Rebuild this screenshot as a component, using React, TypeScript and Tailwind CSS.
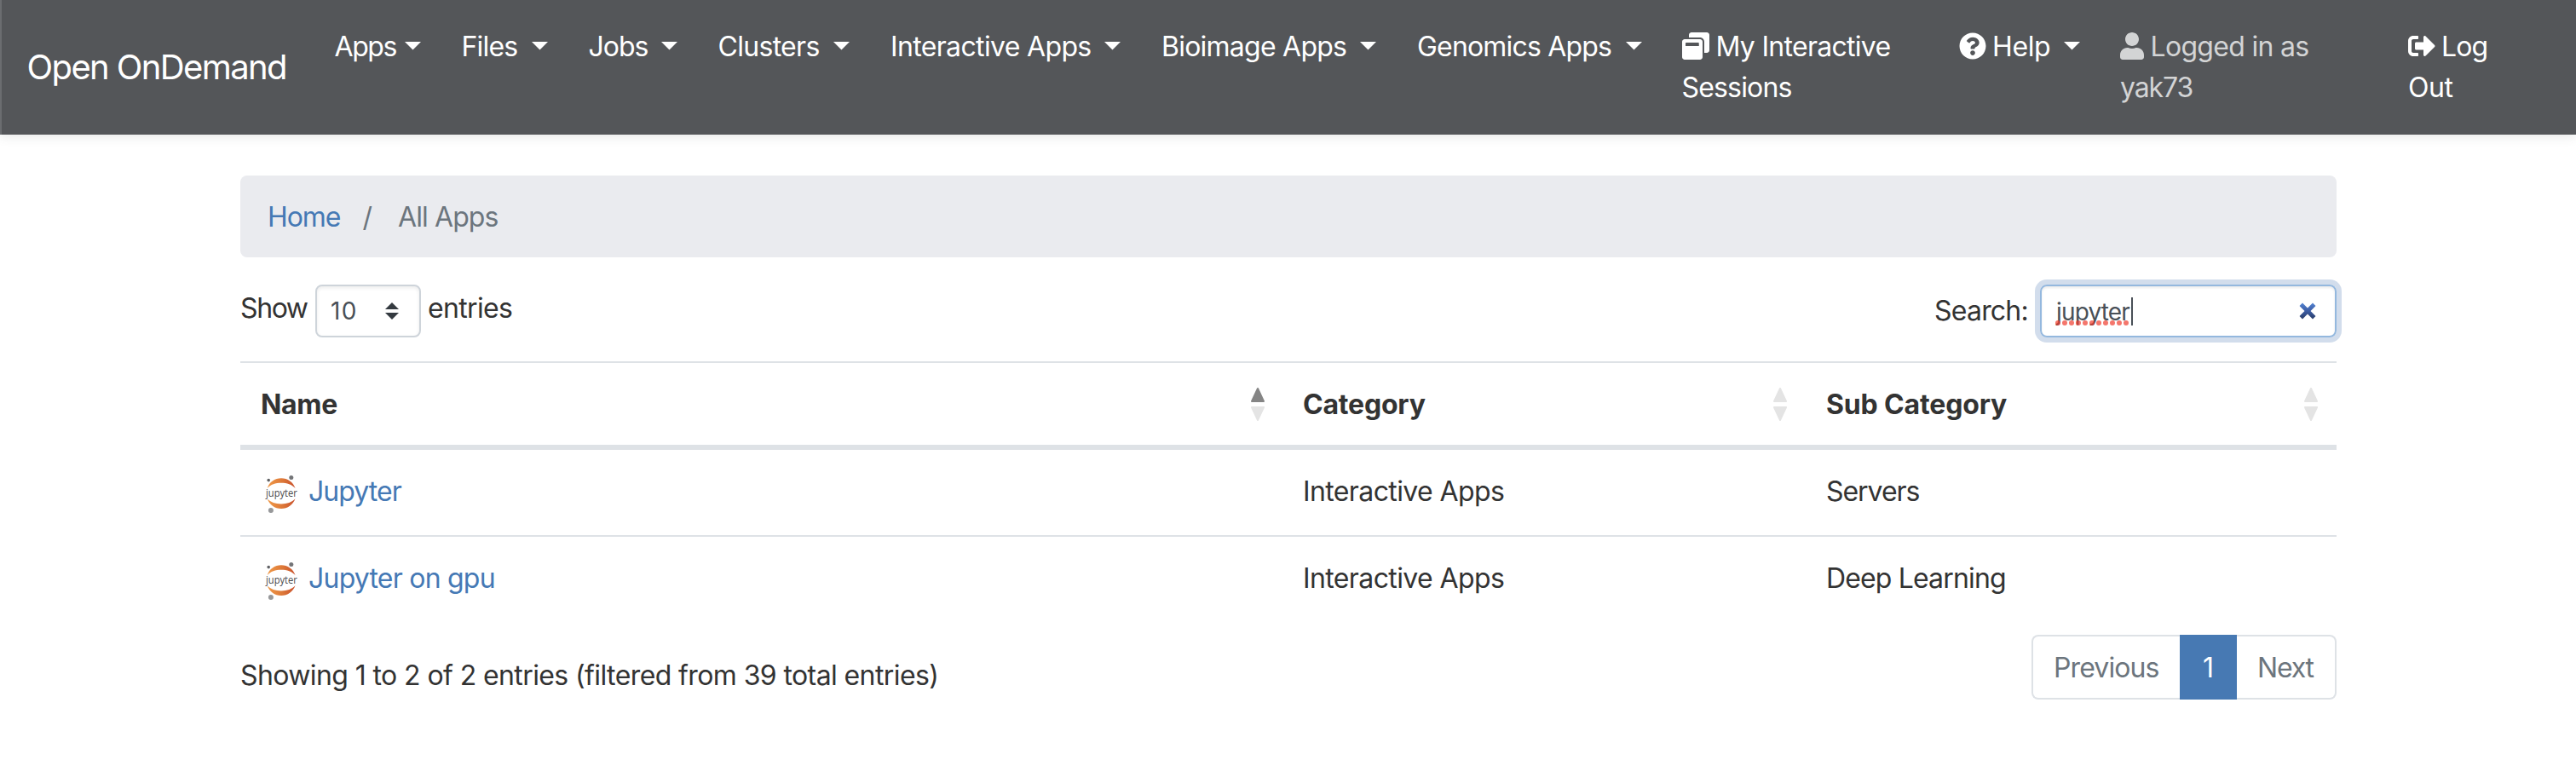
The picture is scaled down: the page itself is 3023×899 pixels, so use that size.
import { FaQuestionCircle, FaSignOutAlt, FaUser, FaWindowRestore } from "react-icons/fa";

const menus = [
  { label: "Apps", box: "w-[101px]", text: "tracking-[-1.4px]" },
  { label: "Files", box: "w-[102px]", text: "pl-px tracking-[-0.8px]" },
  { label: "Jobs", box: "w-[105px]", text: "pl-px tracking-[-1px]" },
  { label: "Clusters", box: "w-[155.5px]", text: "pl-px tracking-[-0.7px]" },
  { label: "Interactive Apps", box: "w-[271px]", text: "pl-px tracking-[-0.65px]" },
  { label: "Bioimage Apps", box: "w-[253px]", text: "pl-px tracking-[-0.76px]" },
  { label: "Genomics Apps", box: "w-[264.5px]", text: "pl-px tracking-[-0.82px]" },
];

const apps = [
  { name: "Jupyter", tracking: "tracking-[-0.95px]", category: "Interactive Apps", sub: "Servers", subTracking: "tracking-[-1.05px]" },
  { name: "Jupyter on gpu", tracking: "tracking-[-0.78px]", category: "Interactive Apps", sub: "Deep Learning", subTracking: "tracking-[-0.85px]" },
];

function Caret() {
  return (
    <svg className="mt-[18px] h-[9.5px] w-[19px] shrink-0" viewBox="0 0 19 9.5">
      <path d="M0 0H19L9.5 9.5Z" fill="currentColor" />
    </svg>
  );
}

function SortArrows({ ascending = false }: { ascending?: boolean }) {
  return (
    <svg className="h-10 w-[18px]" viewBox="0 0 18 40" strokeLinejoin="round" strokeWidth="2">
      <path d="M2 17L9 2L16 17Z" fill={ascending ? "#858585" : "#e4e4e4"} stroke={ascending ? "#858585" : "#e4e4e4"} />
      <path d="M2 24L9 39L16 24Z" fill="#e4e4e4" stroke="#e4e4e4" />
    </svg>
  );
}

function JupyterLogo({ id }: { id: string }) {
  return (
    <svg className="mt-[4px] h-[46px] w-[42px] shrink-0 overflow-visible" viewBox="0 0 42 46">
      <defs>
        <linearGradient id={id} x1="0" x2="1" y1="0" y2="0">
          <stop offset="0" stopColor="#f09a48" />
          <stop offset="0.55" stopColor="#dd7838" />
          <stop offset="1" stopColor="#c8502c" />
        </linearGradient>
      </defs>
      <path d="M4.7 16C7 8.800 13.500 4.300 21 4.300S35 8.800 37.500 16C33.500 11.700 27.800 9.800 21 9.800S8.700 11.700 4.700 16Z" fill={`url(#${id})`} />
      <path d="M4.700 28.300C7 35.500 13.500 40 21 40S35 35.500 37.500 28.300C33.500 32.600 27.800 34.500 21 34.500S8.700 32.600 4.700 28.300Z" fill={`url(#${id})`} />
      <circle cx="6.200" cy="6.600" r="1.800" fill="#5f6063" />
      <circle cx="32.800" cy="3.400" r="2.500" fill="#737477" />
      <circle cx="8.900" cy="42" r="3" fill="#97989a" />
      <text transform="translate(3 25.500) scale(0.86 1)" fontFamily="Open Sans" fontSize="13" fill="#4a4a4c">jupyter</text>
    </svg>
  );
}

export default function App() {
  return (
    <div className="h-[899px] w-[3023px] overflow-hidden bg-white font-['Inter',sans-serif] text-[32px] leading-[48px] text-[#333333]">
      <nav className="flex h-[158px] items-start border-x-2 border-l-[#6b6d70] border-r-[#545659] bg-[#545659] whitespace-nowrap text-white shadow-[0_2px_12px_rgba(70,80,80,0.14)]">
        <a className="mt-[49px] ml-[29.5px] w-[361px] shrink-0 text-[40px] leading-[60px] tracking-[-1.6px]">Open OnDemand</a>
        <ul className="flex gap-[47px] pt-[31px]">
          {menus.map((m) => (
            <li key={m.label} className={`flex shrink-0 justify-between ${m.box}`}>
              <span className={m.text}>{m.label}</span>
              <Caret />
            </li>
          ))}
          <li className="w-[278px] shrink-0">
            <div className="flex gap-[8px] tracking-[-0.71px]">
              <FaWindowRestore className="mt-[7px] size-8" />
              My Interactive
            </div>
            <div className="tracking-[-0.83px]">Sessions</div>
          </li>
          <li className="flex w-[142.5px] shrink-0">
            <FaQuestionCircle className="mt-[7px] size-8 shrink-0" />
            <span className="mr-auto ml-[7.5px] tracking-[-0.4px]">Help</span>
            <Caret />
          </li>
          <li className="w-[291px] shrink-0 text-[#d3d4d5]">
            <div className="flex gap-[7.5px] tracking-[-0.7px]">
              <FaUser className="mt-[7px] h-8 w-7" />
              Logged in as
            </div>
            <div className="tracking-[-1.1px]">yak73</div>
          </li>
          <li className="shrink-0">
            <div className="flex gap-[7px] tracking-[-0.89px]">
              <FaSignOutAlt className="mt-[7px] size-8" />
              Log
            </div>
            <div className="tracking-[-0.45px]">Out</div>
          </li>
        </ul>
      </nav>

      <main className="ml-[282px] w-[2460px] pt-12">
        <div className="flex h-24 items-center rounded-lg bg-[#eaebef] pt-[2px] pl-8">
          <a className="w-[111.5px] tracking-[-1.07px] text-[#4579b5]">Home</a>
          <span className="w-[41.5px] text-[#6c757d]">/</span>
          <span className="tracking-[-0.9px] text-[#6c757d]">All Apps</span>
        </div>

        <div className="mt-8 flex h-[62px] items-start justify-between">
          <div className="flex">
            <span className="mt-[4px] w-[88px] tracking-[-1.4px]">Show</span>
            <div className="flex h-[62px] w-[124px] items-center justify-between rounded-lg border-2 border-[#ced4da] pr-[24px] pl-[16px] text-[28px] text-[#495057] shadow-[inset_0_2px_4px_rgba(0,0,0,0.08)]">
              <span className="tracking-[1.3px]">10</span>
              <svg className="h-[20px] w-[16px]" viewBox="0 0 16 20">
                <path d="M0 8L8 0L16 8ZM0 12L8 20L16 12Z" fill="#343a40" />
              </svg>
            </div>
            <span className="mt-[4px] ml-[8px] tracking-[-0.65px]">entries</span>
          </div>
          <div className="flex">
            <span className="mt-[7px] w-[124px] tracking-[-0.78px]">Search:</span>
            <div className="relative flex h-[62px] w-[348px] items-center rounded-lg border-2 border-[#94b8de] pr-[22px] pl-[17px] text-[28px] text-[#495057] shadow-[inset_0_2px_3px_rgba(0,0,0,0.08),0_0_0_6px_#d2ddec]">
              <span className="pt-px tracking-[-0.85px]">jupyter</span>
              <svg className="absolute top-[40px] left-[16px] h-[6px] w-[86px]" viewBox="0 0 86 6">
                <path d="M3 3H84" stroke="#f03c2e" strokeOpacity="0.7" strokeWidth="6" strokeLinecap="round" strokeDasharray="0 8" />
              </svg>
              <span className="absolute top-[13px] left-[105px] h-[33px] w-[2px] bg-[#495057]" />
              <svg className="ml-auto h-[20px] w-[20px]" viewBox="0 0 20 20">
                <defs>
                  <linearGradient id="clear" x1="0" x2="0" y1="0" y2="1">
                    <stop offset="0" stopColor="#5384d2" />
                    <stop offset="0.5" stopColor="#3c5ca4" />
                    <stop offset="1" stopColor="#293c66" />
                  </linearGradient>
                </defs>
                <path d="M4 0.500L10 6.500L16 0.500L19.500 4L13.500 10L19.500 16L16 19.500L10 13.500L4 19.500L0.500 16L6.500 10L0.500 4Z" fill="url(#clear)" />
              </svg>
            </div>
          </div>
        </div>

        <table className="mt-7 w-full table-fixed border-separate border-spacing-0">
          <colgroup>
            <col className="w-[1223px]" />
            <col className="w-[614px]" />
            <col className="w-[623px]" />
          </colgroup>
          <thead>
            <tr className="text-left">
              <th className="h-[104px] border-t-2 border-b-6 border-[#dee2e6] p-0 pr-[20px] pl-6 font-bold">
                <div className="flex items-center justify-between">
                  <span className="pt-[2px] tracking-[-0.3px]">Name</span>
                  <SortArrows ascending />
                </div>
              </th>
              <th className="border-t-2 border-b-6 border-[#dee2e6] p-0 pr-[21px] pl-6 font-bold">
                <div className="flex items-center justify-between">
                  <span className="pt-[2px] tracking-[-0.2px]">Category</span>
                  <SortArrows />
                </div>
              </th>
              <th className="border-t-2 border-b-6 border-[#dee2e6] p-0 pr-[21px] pl-6 font-bold">
                <div className="flex items-center justify-between">
                  <span className="pt-[2px] tracking-[-0.15px]">Sub Category</span>
                  <SortArrows />
                </div>
              </th>
            </tr>
          </thead>
          <tbody className="align-top [&>tr:last-child>td]:h-[102px] [&>tr:last-child>td]:border-t-2">
            {apps.map((app, i) => (
              <tr key={app.name}>
                <td className="h-[100px] border-[#dee2e6] p-0 pt-[25px] pl-[27px]">
                  <div className="flex items-start">
                    <JupyterLogo id={`planet-${i}`} />
                    <a className={`ml-[11px] text-[#4579b5] ${app.tracking}`}>{app.name}</a>
                  </div>
                </td>
                <td className="border-[#dee2e6] p-0 pt-[25px] pl-6 tracking-[-0.61px]">{app.category}</td>
                <td className={`border-[#dee2e6] p-0 pt-[25px] pl-6 ${app.subTracking}`}>{app.sub}</td>
              </tr>
            ))}
          </tbody>
        </table>

        <div className="mt-[15px] flex h-[76px] justify-between">
          <p className="mt-6 tracking-[-0.6px]">Showing 1 to 2 of 2 entries (filtered from 39 total entries)</p>
          <div className="flex h-[76px] w-[358px] text-[#6c757d]">
            <span className="flex w-[174px] items-center rounded-l-lg border-2 border-r-0 border-[#dee2e6] pt-[2px] pl-[24px] tracking-[-0.89px]">Previous</span>
            <span className="flex w-[67px] items-center justify-center bg-[#4779b3] pt-[2px] text-white">1</span>
            <span className="flex w-[117px] items-center rounded-r-lg border-2 border-l-0 border-[#dee2e6] pt-[2px] pl-[24px] tracking-[-1.2px]">Next</span>
          </div>
        </div>
      </main>
    </div>
  );
}
